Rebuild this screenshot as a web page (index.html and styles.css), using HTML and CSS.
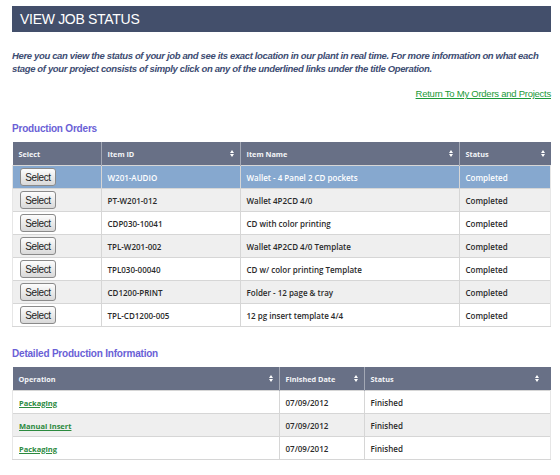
FILE: index.html
```html
<!DOCTYPE html>
<html>
<head>
    <title>View Job Status</title>
    <link rel="stylesheet" href="styles.css">
</head>
<body>
    <div class="page">
        <div class="title-bar">VIEW JOB STATUS</div>

        <p class="intro">Here you can view the status of your job and see its exact location in our plant in real time. For more information on what each stage of your project consists of simply click on any of the underlined links under the title Operation.</p>

        <div class="return-row">
            <a href="#" class="return-link">Return To My Orders and Projects</a>
        </div>

        <h2 class="section-title">Production Orders</h2>
        <table class="grid orders">
            <thead>
                <tr>
                    <th class="col-select">Select</th>
                    <th class="col-id sortable">Item ID <span class="sort"></span></th>
                    <th class="col-name sortable">Item Name <span class="sort"></span></th>
                    <th class="col-status sortable">Status <span class="sort"></span></th>
                </tr>
            </thead>
            <tbody>
                <tr class="active">
                    <td><button class="select-btn">Select</button></td>
                    <td>W201-AUDIO</td>
                    <td>Wallet - 4 Panel 2 CD pockets</td>
                    <td>Completed</td>
                </tr>
                <tr class="alt">
                    <td><button class="select-btn">Select</button></td>
                    <td>PT-W201-012</td>
                    <td>Wallet 4P2CD 4/0</td>
                    <td>Completed</td>
                </tr>
                <tr>
                    <td><button class="select-btn">Select</button></td>
                    <td>CDP030-10041</td>
                    <td>CD with color printing</td>
                    <td>Completed</td>
                </tr>
                <tr class="alt">
                    <td><button class="select-btn">Select</button></td>
                    <td>TPL-W201-002</td>
                    <td>Wallet 4P2CD 4/0 Template</td>
                    <td>Completed</td>
                </tr>
                <tr>
                    <td><button class="select-btn">Select</button></td>
                    <td>TPL030-00040</td>
                    <td>CD w/ color printing Template</td>
                    <td>Completed</td>
                </tr>
                <tr class="alt">
                    <td><button class="select-btn">Select</button></td>
                    <td>CD1200-PRINT</td>
                    <td>Folder - 12 page &amp; tray</td>
                    <td>Completed</td>
                </tr>
                <tr>
                    <td><button class="select-btn">Select</button></td>
                    <td>TPL-CD1200-005</td>
                    <td>12 pg insert template 4/4</td>
                    <td>Completed</td>
                </tr>
            </tbody>
        </table>

        <h2 class="section-title detail-title">Detailed Production Information</h2>
        <table class="grid details">
            <thead>
                <tr>
                    <th class="col-op sortable">Operation <span class="sort"></span></th>
                    <th class="col-date sortable">Finished Date <span class="sort"></span></th>
                    <th class="col-fin sortable">Status <span class="sort"></span></th>
                </tr>
            </thead>
            <tbody>
                <tr>
                    <td><a href="#" class="op-link">Packaging</a></td>
                    <td>07/09/2012</td>
                    <td>Finished</td>
                </tr>
                <tr class="alt">
                    <td><a href="#" class="op-link">Manual Insert</a></td>
                    <td>07/09/2012</td>
                    <td>Finished</td>
                </tr>
                <tr>
                    <td><a href="#" class="op-link">Packaging</a></td>
                    <td>07/09/2012</td>
                    <td>Finished</td>
                </tr>
            </tbody>
        </table>
    </div>
</body>
</html>
```

FILE: styles.css
```css
body {
    margin: 0;
    background-color: #fff;
    font-family: "Liberation Sans", Arial, sans-serif;
}

.page {
    margin: 6px 9px 0 12px;
}

.title-bar {
    height: 26px;
    line-height: 27px;
    padding-left: 8px;
    background-color: #434f6b;
    color: #fff;
    font-size: 14px;
    letter-spacing: -0.3px;
}

.intro {
    margin: 17px 0 0 0;
    font-size: 9.5px;
    line-height: 13px;
    font-weight: bold;
    font-style: italic;
    letter-spacing: -0.35px;
    color: #3d4c72;
}

.return-row {
    text-align: right;
    margin-top: 12px;
    font-size: 9.5px;
    line-height: 13px;
    letter-spacing: -0.25px;
}

.return-link {
    color: #1b9a38;
}

.section-title {
    margin: 22px 0 6px 0;
    font-size: 10px;
    line-height: 14px;
    letter-spacing: -0.2px;
    color: #6a5fd6;
}

.detail-title {
    margin-top: 20px;
}

.grid {
    width: 100%;
    border-collapse: collapse;
    font-family: "Open Sans", sans-serif;
    font-size: 8px;
    font-weight: 600;
    color: #2a2a2a;
}

.grid th {
    height: 23px;
    padding: 0 6px;
    background-color: #687086;
    color: #f4f5f8;
    text-align: left;
    font-size: 7.3px;
    font-weight: bold;
    border-left: 1px solid #a3a8b5;
    position: relative;
}

.grid th:first-child {
    border-left: none;
}

.grid td {
    height: 22px;
    padding: 0 6px;
    border-top: 1px solid #d6d6d6;
    border-left: 1px solid #d6d6d6;
    background-color: #fff;
}

.grid td:first-child {
    border-left: 1px solid #e6e6e6;
}

.grid td:last-child {
    border-right: 1px solid #e6e6e6;
}

.grid tbody tr:last-child td {
    border-bottom: 1px solid #d6d6d6;
}

.grid tr.alt td {
    background-color: #efefef;
}

.grid tr.active td {
    background-color: #86a8cf;
    color: #fff;
}

.orders td:first-child {
    padding-left: 7px;
}

.sort {
    position: absolute;
    right: 5px;
    top: 8px;
    width: 5px;
    height: 7px;
}

.sort::before,
.sort::after {
    content: "";
    position: absolute;
    left: 0;
    border-left: 2.5px solid transparent;
    border-right: 2.5px solid transparent;
}

.sort::before {
    top: 0;
    border-bottom: 3px solid #fff;
}

.sort::after {
    bottom: 0;
    border-top: 3px solid #fff;
}

.col-select { width: 76px; }
.col-id { width: 126px; }
.col-name { width: 206px; }

.col-op { width: 254px; }
.col-date { width: 72px; }
.col-fin .sort { right: 11px; }

.select-btn {
    display: block;
    width: 36px;
    height: 18px;
    padding: 0;
    font-family: "Liberation Sans", sans-serif;
    font-size: 10px;
    letter-spacing: -0.4px;
    color: #222;
    border: 1px solid #8a8a8a;
    border-radius: 3px;
    background: linear-gradient(to bottom, #fdfdfd, #d9d9d9);
}

.op-link {
    color: #2b8a3e;
    font-weight: bold;
    font-size: 7.5px;
}
```
